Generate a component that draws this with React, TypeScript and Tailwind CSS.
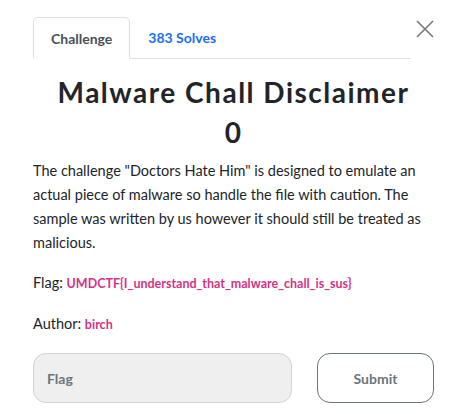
import React from "react";

export default function App() {
  return (
    <div className="w-[465px] h-[414px] bg-white overflow-hidden" style={{ fontFamily: "Lato, 'Noto Sans', sans-serif" }}>
      <div className="pl-[33px] pr-[31px] pt-[17px]">
        <div className="flex items-start">
          <ul className="flex w-[378px] border-b border-[#dee2e6]">
            <li className="-mb-px h-[42px] px-[17px] flex items-center border border-[#dee2e6] border-b-white rounded-t-[5px] bg-white text-[14px] font-bold text-[#495057]">
              Challenge
            </li>
            <li className="h-[41px] px-[18px] flex items-center text-[14px] font-bold text-[#1a6dff]">
              383 Solves
            </li>
          </ul>
          <button className="ml-auto mt-[3px] w-[18px] h-[18px] flex items-center justify-center">
            <svg width="18" height="18" viewBox="0 0 18 18">
              <path d="M1 1 L17 17 M17 1 L1 17" stroke="#777" strokeWidth="1.6" fill="none" />
            </svg>
          </button>
        </div>
        <h2 className="mt-[13px] text-center text-[28px] leading-[40px] font-bold text-[#212529] tracking-[1.5px]">
          Malware Chall Disclaimer
          <br />0
        </h2>
        <p className="mt-[7px] text-[14.5px] leading-[24px] text-[#212529]">
          The challenge "Doctors Hate Him" is designed to emulate an actual piece of malware so handle the file with caution. The sample was written by us however it should still be treated as malicious.
        </p>
        <p className="mt-[16px] text-[14.5px] leading-[24px] text-[#212529]">
          Flag: <code className="text-[12.5px] font-bold text-[#d63384]" style={{ fontFamily: "inherit" }}>UMDCTF{"{"}I_understand_that_malware_chall_is_sus{"}"}</code>
        </p>
        <p className="mt-[16px] text-[14.5px] leading-[24px] text-[#212529]">
          Author: <code className="text-[12.5px] font-bold text-[#d63384]" style={{ fontFamily: "inherit" }}>birch</code>
        </p>
        <div className="mt-[16px] flex">
          <div className="w-[259px] h-[50px] rounded-[13px] border border-[#ced4da] bg-[#efefef] flex items-center pl-[13px] text-[14px] font-bold text-[#6c757d]">
            Flag
          </div>
          <button className="ml-[25px] w-[117px] h-[50px] rounded-[13px] border border-[#6c757d] bg-white text-[14px] font-bold text-[#6c757d]">
            Submit
          </button>
        </div>
      </div>
    </div>
  );
}
